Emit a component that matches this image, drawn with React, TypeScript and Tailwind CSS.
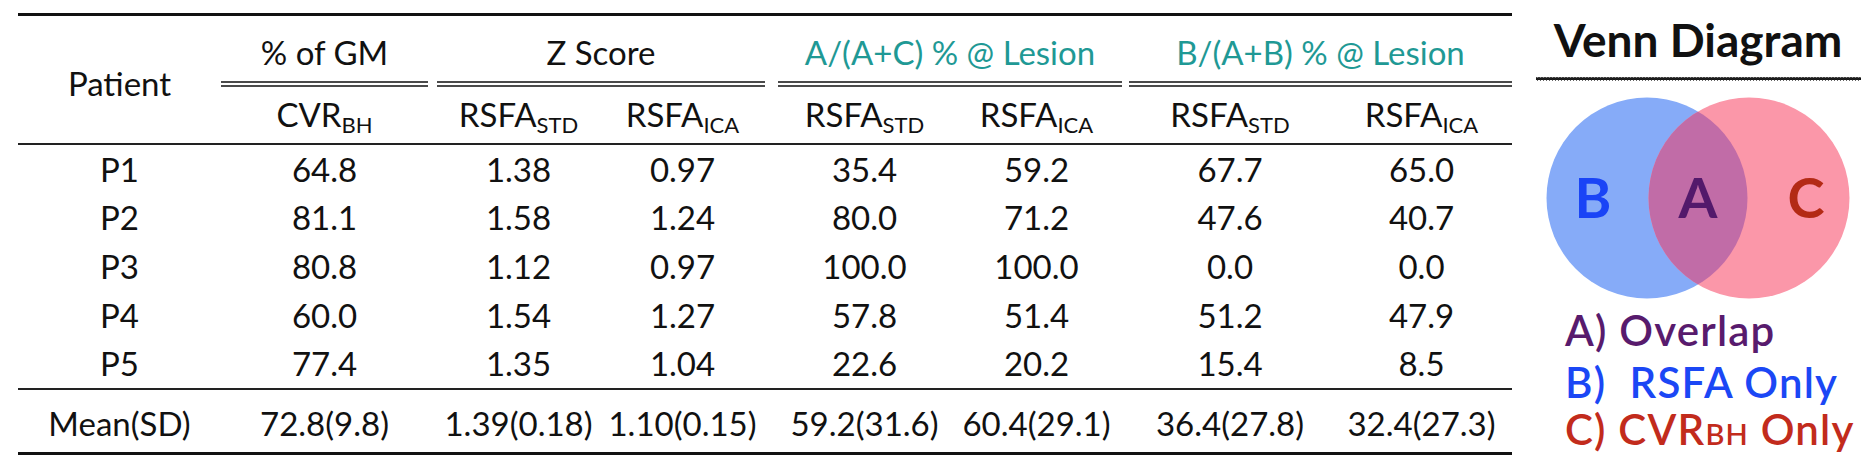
import React from "react";

const COLS = [
  "col-start-1",
  "col-start-2",
  "col-start-4",
  "col-start-5",
  "col-start-7",
  "col-start-8",
  "col-start-10",
  "col-start-11",
];

const rows = [
  ["P1", "64.8", "1.38", "0.97", "35.4", "59.2", "67.7", "65.0"],
  ["P2", "81.1", "1.58", "1.24", "80.0", "71.2", "47.6", "40.7"],
  ["P3", "80.8", "1.12", "0.97", "100.0", "100.0", "0.0", "0.0"],
  ["P4", "60.0", "1.54", "1.27", "57.8", "51.4", "51.2", "47.9"],
  ["P5", "77.4", "1.35", "1.04", "22.6", "20.2", "15.4", "8.5"],
];

const mean = [
  "Mean(SD)",
  "72.8(9.8)",
  "1.39(0.18)",
  "1.10(0.15)",
  "59.2(31.6)",
  "60.4(29.1)",
  "36.4(27.8)",
  "32.4(27.3)",
];

const GRID =
  "grid grid-cols-[203px_207px_9px_163px_165px_13px_173px_171px_7px_202px_181px]";

function Sub({ main, sub }: { main: string; sub: string }) {
  return (
    <span className="whitespace-nowrap">
      {main}
      <sub className="text-[22px]">{sub}</sub>
    </span>
  );
}

function DoubleLine({ cls }: { cls: string }) {
  return <div className={`${cls} h-[6px] border-y-2 border-[#4a4a4a]`} />;
}

function Wavy() {
  const pts: string[] = [];
  for (let i = 0; i <= 325; i += 1.5) {
    const y = Math.round(i / 1.5) % 2 === 0 ? 1 : 4.5;
    pts.push(`${i},${y}`);
  }
  return (
    <svg width="325" height="6" className="block">
      <line x1="0" y1="2.8" x2="325" y2="2.8" stroke="#111" strokeWidth="2.4" />
      <polyline points={pts.join(" ")} fill="none" stroke="#222" strokeWidth="0.9" />
    </svg>
  );
}

function Venn() {
  return (
    <svg width="304" height="202" viewBox="1546 97 304 202" className="block">
      <defs>
        <clipPath id="blueClip">
          <circle cx="1647" cy="198" r="100.5" />
        </clipPath>
      </defs>
      <circle cx="1647" cy="198" r="100.5" fill="#86abf8" />
      <circle cx="1749" cy="198" r="100.5" fill="#fb97a9" />
      <circle cx="1749" cy="198" r="100.5" fill="#c16ca7" clipPath="url(#blueClip)" />
      <text
        x="1593"
        y="218"
        textAnchor="middle"
        fontFamily="Lato, sans-serif"
        fontWeight="700"
        fontSize="56"
        fill="#1a44f6"
      >
        B
      </text>
      <text
        x="1698"
        y="218"
        textAnchor="middle"
        fontFamily="Lato, sans-serif"
        fontWeight="700"
        fontSize="56"
        fill="#53196b"
      >
        A
      </text>
      <text
        x="1806"
        y="218"
        textAnchor="middle"
        fontFamily="Lato, sans-serif"
        fontWeight="700"
        fontSize="56"
        fill="#b32a15"
      >
        C
      </text>
    </svg>
  );
}

export default function App() {
  return (
    <div className="w-[1874px] h-[462px] bg-white flex font-['Lato',sans-serif] text-[#111] overflow-hidden">
      {/* Table */}
      <div className="ml-[18px] mt-[13px] w-[1494px] flex flex-col text-[33px]">
        <div className="h-[3px] bg-[#111]" />
        <div className={`${GRID} grid-rows-[65px_6px_56px]`}>
          <div className="col-start-1 row-start-1 row-span-3 flex items-center justify-center pt-[8px] leading-none">
            Patient
          </div>
          <div className="col-start-2 row-start-1 flex items-center justify-center pt-[9px]">% of GM</div>
          <div className="col-start-4 col-span-2 row-start-1 flex items-center justify-center pt-[9px]">
            Z Score
          </div>
          <div className="col-start-7 col-span-2 row-start-1 flex items-center justify-center pt-[9px] text-[#1f9995] whitespace-nowrap">
            A/(A+C) % @ Lesion
          </div>
          <div className="col-start-10 col-span-2 row-start-1 flex items-center justify-center pt-[9px] text-[#1f9995] whitespace-nowrap">
            B/(A+B) % @ Lesion
          </div>
          <DoubleLine cls="col-start-2 row-start-2" />
          <DoubleLine cls="col-start-4 col-span-2 row-start-2" />
          <DoubleLine cls="col-start-7 col-span-2 row-start-2" />
          <DoubleLine cls="col-start-10 col-span-2 row-start-2" />
          <div className="col-start-2 row-start-3 flex items-center justify-center">
            <Sub main="CVR" sub="BH" />
          </div>
          <div className="col-start-4 row-start-3 flex items-center justify-center">
            <Sub main="RSFA" sub="STD" />
          </div>
          <div className="col-start-5 row-start-3 flex items-center justify-center">
            <Sub main="RSFA" sub="ICA" />
          </div>
          <div className="col-start-7 row-start-3 flex items-center justify-center">
            <Sub main="RSFA" sub="STD" />
          </div>
          <div className="col-start-8 row-start-3 flex items-center justify-center">
            <Sub main="RSFA" sub="ICA" />
          </div>
          <div className="col-start-10 row-start-3 flex items-center justify-center">
            <Sub main="RSFA" sub="STD" />
          </div>
          <div className="col-start-11 row-start-3 flex items-center justify-center">
            <Sub main="RSFA" sub="ICA" />
          </div>
        </div>
        <div className="h-[2px] bg-[#222]" />
        {rows.map((r) => (
          <div key={r[0]} className={`${GRID} h-[48.6px]`}>
            {r.map((v, i) => (
              <div key={i} className={`${COLS[i]} row-start-1 flex items-center justify-center leading-none`}>
                {v}
              </div>
            ))}
          </div>
        ))}
        <div className="h-[2px] bg-[#222]" />
        <div className={`${GRID} h-[62px] pt-[6px]`}>
          {mean.map((v, i) => (
            <div
              key={i}
              className={`${COLS[i]} row-start-1 flex items-center justify-center leading-none whitespace-nowrap`}
            >
              {v}
            </div>
          ))}
        </div>
        <div className="h-[3px] bg-[#111]" />
      </div>

      {/* Venn panel */}
      <div className="flex-1 pl-[10px] pt-[17px] flex flex-col items-center">
        <div className="text-[46px] leading-[46px] font-bold">Venn Diagram</div>
        <div className="mt-[13px]">
          <Wavy />
        </div>
        <div className="mt-[15px]">
          <Venn />
        </div>
        <div className="self-start ml-[43px] mt-[8px] text-[42px] font-semibold tracking-[1.2px]">
          <div className="leading-[46px] text-[#581b6d]">A) Overlap</div>
          <div className="leading-[46px] mt-[6px] text-[#1b47f5] whitespace-pre">B)  RSFA Only</div>
          <div className="leading-[46px] mt-[1px] text-[#c22b1c] whitespace-nowrap">
            C) CVR<span className="text-[29px]">BH</span> Only
          </div>
        </div>
      </div>
    </div>
  );
}
